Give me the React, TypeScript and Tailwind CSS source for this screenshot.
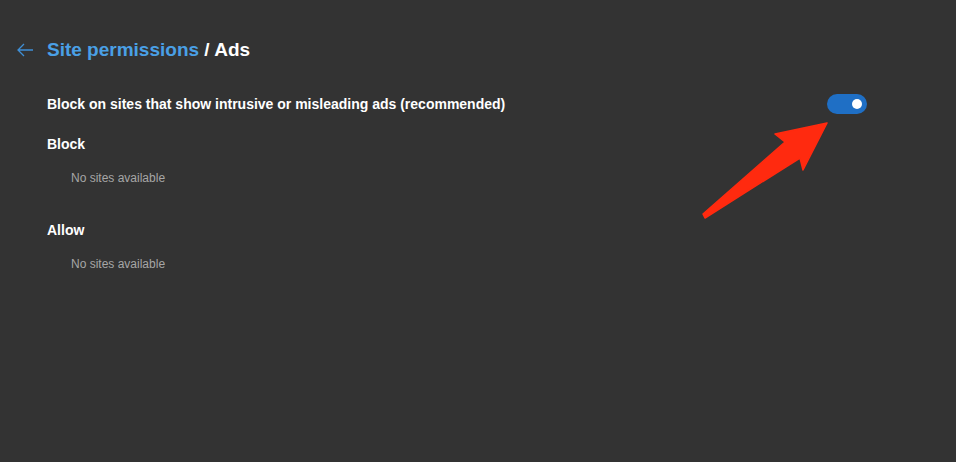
import React from 'react';

const font = { fontFamily: '"Liberation Sans", Arial, sans-serif' };

const Section = ({ title }: { title: string }) => (
  <div>
    <h3 className="text-[14px] font-bold text-white leading-[20px]">{title}</h3>
    <p className="mt-[16px] pl-6 text-[12px] text-[#a6a6a6] leading-[16px]">No sites available</p>
  </div>
);

export default function App() {
  return (
    <div className="relative w-[956px] h-[462px] bg-[#333333] overflow-hidden" style={font}>
      {/* Header */}
      <div className="flex items-center h-[24px] mt-[38px] pl-[15px]">
        <button className="w-[20px] h-[20px] flex items-center justify-center text-[#3f8fd6]">
          <svg width="20" height="20" viewBox="0 0 20 20" fill="none" stroke="currentColor" strokeWidth="1.3">
            <path d="M18 10H3M9 4L3 10L9 16" />
          </svg>
        </button>
        <h1 className="ml-[12px] text-[19px] font-bold leading-[24px]">
          <span className="text-[#4aa0e6]">Site permissions</span>
          <span className="text-white"> / Ads</span>
        </h1>
      </div>

      <div className="pl-[47px] w-[867px]">
        {/* Toggle row */}
        <div className="flex items-center justify-between mt-[32px] h-[20px]">
          <span className="text-[14px] font-bold text-white">
            Block on sites that show intrusive or misleading ads (recommended)
          </span>
          <div className="w-[40px] h-[20px] rounded-full bg-[#1f6fc5] flex items-center justify-end pr-[5px]">
            <div className="w-[10px] h-[10px] rounded-full bg-white" />
          </div>
        </div>

        <div className="mt-[20px] flex flex-col gap-[34px]">
          <Section title="Block" />
          <Section title="Allow" />
        </div>
      </div>

      {/* Annotation arrow */}
      <svg className="absolute left-0 top-0 pointer-events-none" width="956" height="462">
        <path
          d="M827 123 L775 134 L785 142 L703 214 L705 218 L800 158 L803 170 Z"
          fill="#ff2a0f"
          stroke="#ff2a0f"
          strokeWidth="1.5"
          strokeLinejoin="round"
        />
      </svg>
    </div>
  );
}
